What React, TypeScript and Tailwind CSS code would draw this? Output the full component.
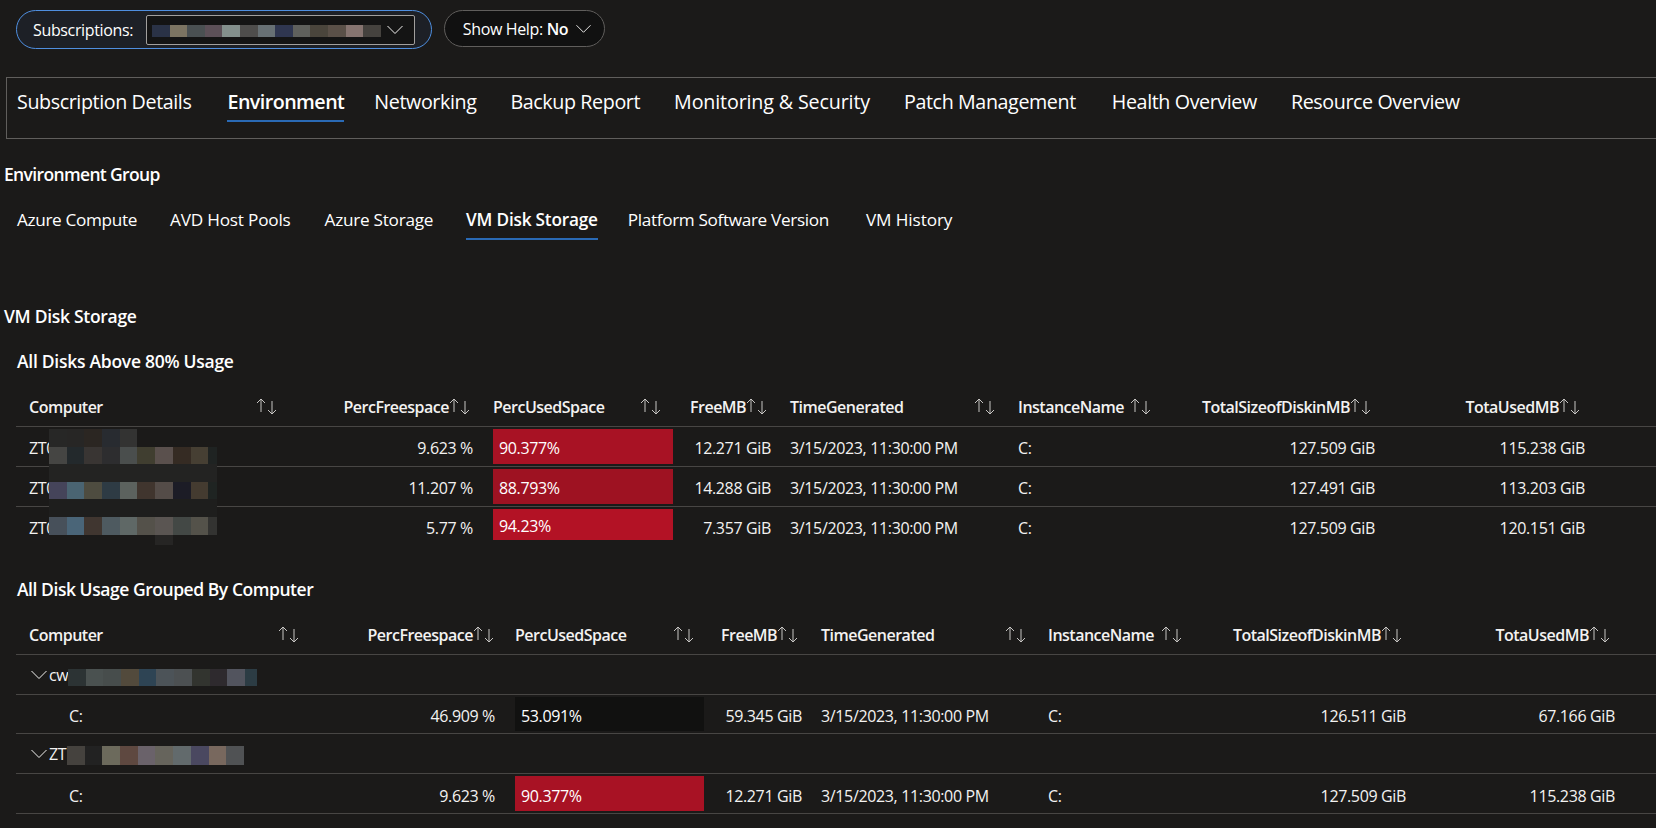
const font = "[font-family:'Open_Sans',sans-serif]";

function SortIcon() {
  return (
    <svg width="21" height="17" viewBox="0 0 21 17" fill="none" stroke="#c8c6c4" strokeWidth="1" className="shrink-0">
      <path d="M5 14V1M1 5l4-4 4 4" />
      <path d="M16 3v13M12 12l4 4 4-4" />
    </svg>
  );
}

function Chevron({ w = 16 }: { w?: number }) {
  return (
    <svg width={w} height="10" viewBox="0 0 16 10" fill="none" stroke="#f3f2f1" strokeWidth="1" className="shrink-0">
      <path d="M0.5 1l7.5 7.5L15.5 1" />
    </svg>
  );
}

function Mosaic({ className, rows }: { className: string; rows: { h: number; indent?: number; cells: string[] }[] }) {
  return (
    <div className={`absolute flex flex-col overflow-hidden ${className}`}>
      {rows.map((row, i) => (
        <div key={i} className="flex" style={{ height: row.h, marginLeft: row.indent ?? 0 }}>
          {row.cells.map((c, j) => (
            <div key={j} className="w-[17.7px] shrink-0" style={{ background: c }} />
          ))}
        </div>
      ))}
    </div>
  );
}

const columns1 = 'grid-cols-[269px_200px_196px_101px_227px_150px_221px_210px]';
const columns2 = 'grid-cols-[291px_200px_205px_101px_226px_151px_221px_209px]';

const headers = ['Computer', 'PercFreespace', 'PercUsedSpace', 'FreeMB', 'TimeGenerated', 'InstanceName', 'TotalSizeofDiskinMB', 'TotaUsedMB'];

function HeaderRow({ grid, cells }: { grid: string; cells: string[] }) {
  return (
    <div className={`grid ${grid} h-[40px] items-center border-b border-[#484644] text-[16px] font-semibold text-[#f3f2f1]`}>
      {headers.map((h, i) => (
        <div key={h} className={cells[i]}>
          <span className="tracking-[-0.5px]">{h}</span>
          <SortIcon />
        </div>
      ))}
    </div>
  );
}

function DataRow({ grid, name, free, used, color, freeMb, size, usedMb, height, last, namePad, text, barBottom = 'pb-[2px]' }: {
  grid: string; name: string; free: string; used: string; color: string; freeMb: string; size: string; usedMb: string; height: string; last?: boolean; namePad: string; text: string; barBottom?: string;
}) {
  return (
    <div className={`grid ${grid} ${height} items-center text-[16px] tracking-[-0.35px] text-[#f3f2f1] ${last ? '' : 'border-b border-[#484644]'}`}>
      <div className={`${namePad} ${text}`}>{name}</div>
      <div className={`pr-[12px] text-right ${text}`}>{free}</div>
      <div className={`h-full pt-[2px] ${barBottom}`}>
        <div className={`mx-2 flex h-full items-center pl-[6px] text-white ${color} ${text}`}>{used}</div>
      </div>
      <div className={`pr-[11px] text-right ${text}`}>{freeMb}</div>
      <div className={`pl-2 ${text}`}>3/15/2023, 11:30:00 PM</div>
      <div className={`pl-[9px] ${text}`}>C:</div>
      <div className={`pr-[5px] text-right ${text}`}>{size}</div>
      <div className={`pr-[5px] text-right ${text}`}>{usedMb}</div>
    </div>
  );
}

function GroupRow({ name }: { name: string }) {
  return (
    <div className="flex h-[40px] items-center gap-[2px] border-b border-[#484644] pl-[15px] text-[16px] tracking-[-0.35px] text-[#f3f2f1]">
      <Chevron />
      <span>{name}</span>
    </div>
  );
}

const head1 = [
  'flex items-center justify-between pl-[13px] pr-2',
  'flex items-center justify-end pr-[15px]',
  'flex items-center justify-between pl-2 pr-[20px]',
  'flex items-center pl-[9px]',
  'flex items-center justify-between pl-2 pr-[14px]',
  'flex items-center justify-between pl-[9px] pr-2',
  'flex items-center justify-end pr-[9px]',
  'flex items-center justify-end pr-[10px]',
];

const head2 = [
  'flex items-center justify-between pl-[13px] pr-2',
  'flex items-center justify-end pr-[13px]',
  'flex items-center justify-between pl-2 pr-[18px]',
  'flex items-center pl-[9px]',
  'flex items-center justify-between pl-2 pr-[13px]',
  'flex items-center justify-between pl-[9px] pr-2',
  'flex items-center justify-end pr-[9px]',
  'flex items-center justify-end pr-[10px]',
];

const heading = 'text-[17.5px] font-semibold leading-[22px]';

export default function App() {
  return (
    <div className={`relative h-[828px] w-full overflow-hidden bg-[#1b1a19] text-white ${font}`}>
      {/* top filters */}
      <div className="flex items-start gap-3 pl-4 pt-[10px]">
        <div className="flex h-[39px] w-[416px] items-center rounded-full border border-[#4f8fe0] bg-[#1d2026] px-4 text-[16px] tracking-[-0.35px]">
          <span className="w-[113px] shrink-0">Subscriptions:</span>
          <div className="relative flex h-[30px] flex-1 items-center justify-end rounded-[2px] border border-[#a19f9d] bg-[#141414] pr-[11px]">
            <div className="absolute left-[5px] top-[9px] flex h-[12px]">
              {['#2a3246', '#7c7462', '#4a5052', '#5c5058', '#838f8c', '#4e4d4c', '#677074', '#2f3650', '#5f605c', '#4a453c', '#5a5048', '#867470', '#45423e'].map((c, i) => (
                <div key={i} className="w-[17.6px]" style={{ background: c }} />
              ))}
            </div>
            <Chevron />
          </div>
        </div>
        <div className="flex h-[37px] w-[161px] items-center justify-center gap-[8px] rounded-full border border-[#605e5c] bg-[#111] pl-[5px] text-[16px] tracking-[-0.35px]">
          <span>Show Help: <b className="font-semibold">No</b></span>
          <Chevron w={15} />
        </div>
      </div>

      {/* main tabs */}
      <div className="ml-[6px] mt-[28px] flex h-[62px] items-start gap-[34px] border border-r-0 border-[#605e5c] pl-[10px] pt-[10px] text-[19.7px] tracking-[-0.4px]">
        <span className="leading-[28px]">Subscription Details</span>
        <span className="-mr-[4px] ml-[2px] border-b-2 border-[#2a6ab5] pb-[4px] font-semibold leading-[28px] tracking-[-0.55px]">Environment</span>
        <span className="leading-[28px]">Networking</span>
        <span className="leading-[28px]">Backup Report</span>
        <span className="leading-[28px] tracking-[-0.15px]">Monitoring &amp; Security</span>
        <span className="leading-[28px]">Patch Management</span>
        <span className="ml-[2px] leading-[28px]">Health Overview</span>
        <span className="leading-[28px]">Resource Overview</span>
      </div>

      <div className={`pl-1 pt-[24px] tracking-[-0.65px] ${heading}`}>Environment Group</div>

      {/* sub tabs */}
      <div className="mt-[23px] flex items-start gap-[33px] pl-[17px] text-[17.2px] tracking-[-0.35px]">
        <span className="leading-[24px]">Azure Compute</span>
        <span className="leading-[24px] tracking-[-0.2px]">AVD Host Pools</span>
        <span className="ml-[1px] leading-[24px] tracking-[-0.27px]">Azure Storage</span>
        <span className="border-b-2 border-[#2a6ab5] pb-[6px] font-semibold leading-[24px] tracking-[-0.2px]">VM Disk Storage</span>
        <span className="-ml-[3px] leading-[24px]">Platform Software Version</span>
        <span className="ml-[4px] leading-[24px] tracking-[-0.1px]">VM History</span>
      </div>

      <div className={`pl-1 pt-[65px] tracking-[-0.3px] ${heading}`}>VM Disk Storage</div>

      {/* first table */}
      <div className={`pl-[17px] pt-[23px] tracking-[-0.27px] ${heading}`}>All Disks Above 80% Usage</div>
      <div className="ml-4 mt-[15px]">
        <HeaderRow grid={columns1} cells={head1} />
        <DataRow grid={columns1} height="h-[40px]" text="pt-[2px]" namePad="pl-[13px]" name="ZT0" free="9.623 %" used="90.377%" color="bg-[#a81224]" freeMb="12.271 GiB" size="127.509 GiB" usedMb="115.238 GiB" />
        <DataRow grid={columns1} height="h-[40px]" text="pt-[2px]" namePad="pl-[13px]" name="ZT0" free="11.207 %" used="88.793%" color="bg-[#9e1222]" freeMb="14.288 GiB" size="127.491 GiB" usedMb="113.203 GiB" />
        <DataRow grid={columns1} height="h-[40px]" text="pt-[2px]" barBottom="pb-[7px]" namePad="pl-[13px]" name="ZT0" free="5.77 %" used="94.23%" color="bg-[#b31225]" freeMb="7.357 GiB" size="127.509 GiB" usedMb="120.151 GiB" last />
      </div>
      <Mosaic
        className="left-[49px] top-[429px] w-[168px]"
        rows={[
          { h: 18, cells: ['#272726', '#272625', '#2b2622', '#282b30', '#333332'] },
          { h: 17, cells: ['#454543', '#23292c', '#393533', '#2d2d2f', '#4a4e4d', '#403e30', '#5a504d', '#352b23', '#463f33', '#1f2322'] },
          { h: 18, cells: ['#232322', '#232322', '#232322', '#232322', '#232322', '#232322', '#232322', '#232322', '#232322', '#232322'] },
          { h: 17, cells: ['#45445a', '#4a6472', '#4e4c40', '#2e3b44', '#5c625e', '#40352e', '#544c48', '#1c1c26', '#443b30', '#1f2422'] },
          { h: 18, cells: ['#1e1e1d', '#1e1e1d', '#1e1e1d', '#1e1e1d', '#1e1e1d', '#1e1e1d', '#1e1e1d', '#1e1e1d', '#1e1e1d', '#1e1e1d'] },
          { h: 18, cells: ['#47505a', '#4a6578', '#403630', '#4e5a60', '#5f6866', '#54514a', '#5a5552', '#434845', '#54524a', '#333331'] },
          { h: 10, indent: 106, cells: ['#262524'] },
        ]}
      />

      {/* second table */}
      <div className={`pl-[17px] pt-[31px] tracking-[-0.45px] ${heading}`}>All Disk Usage Grouped By Computer</div>
      <div className="ml-4 mt-[15px]">
        <HeaderRow grid={columns2} cells={head2} />
        <GroupRow name="cw" />
        <DataRow grid={columns2} height="h-[39px]" text="pt-[4px]" namePad="pl-[53px]" name="C:" free="46.909 %" used="53.091%" color="bg-[#111110]" freeMb="59.345 GiB" size="126.511 GiB" usedMb="67.166 GiB" />
        <GroupRow name="ZT" />
        <DataRow grid={columns2} height="h-[40px]" text="pt-[4px]" namePad="pl-[53px]" name="C:" free="9.623 %" used="90.377%" color="bg-[#a81224]" freeMb="12.271 GiB" size="127.509 GiB" usedMb="115.238 GiB" />
      </div>
      <Mosaic
        className="left-[68px] top-[669px] w-[189px]"
        rows={[{ h: 17, cells: ['#2c3334', '#4a5150', '#474d4c', '#524a3c', '#2e4454', '#4c5358', '#4c5052', '#32342f', '#2e2a2e', '#52545e', '#2c3c44'] }]}
      />
      <Mosaic
        className="left-[67px] top-[746px]"
        rows={[{ h: 19, cells: ['#45423e', '#222222', '#6c6a5c', '#5e4840', '#6a626a', '#66645c', '#626a6c', '#4a4860', '#78685e', '#505254'] }]}
      />
    </div>
  );
}
